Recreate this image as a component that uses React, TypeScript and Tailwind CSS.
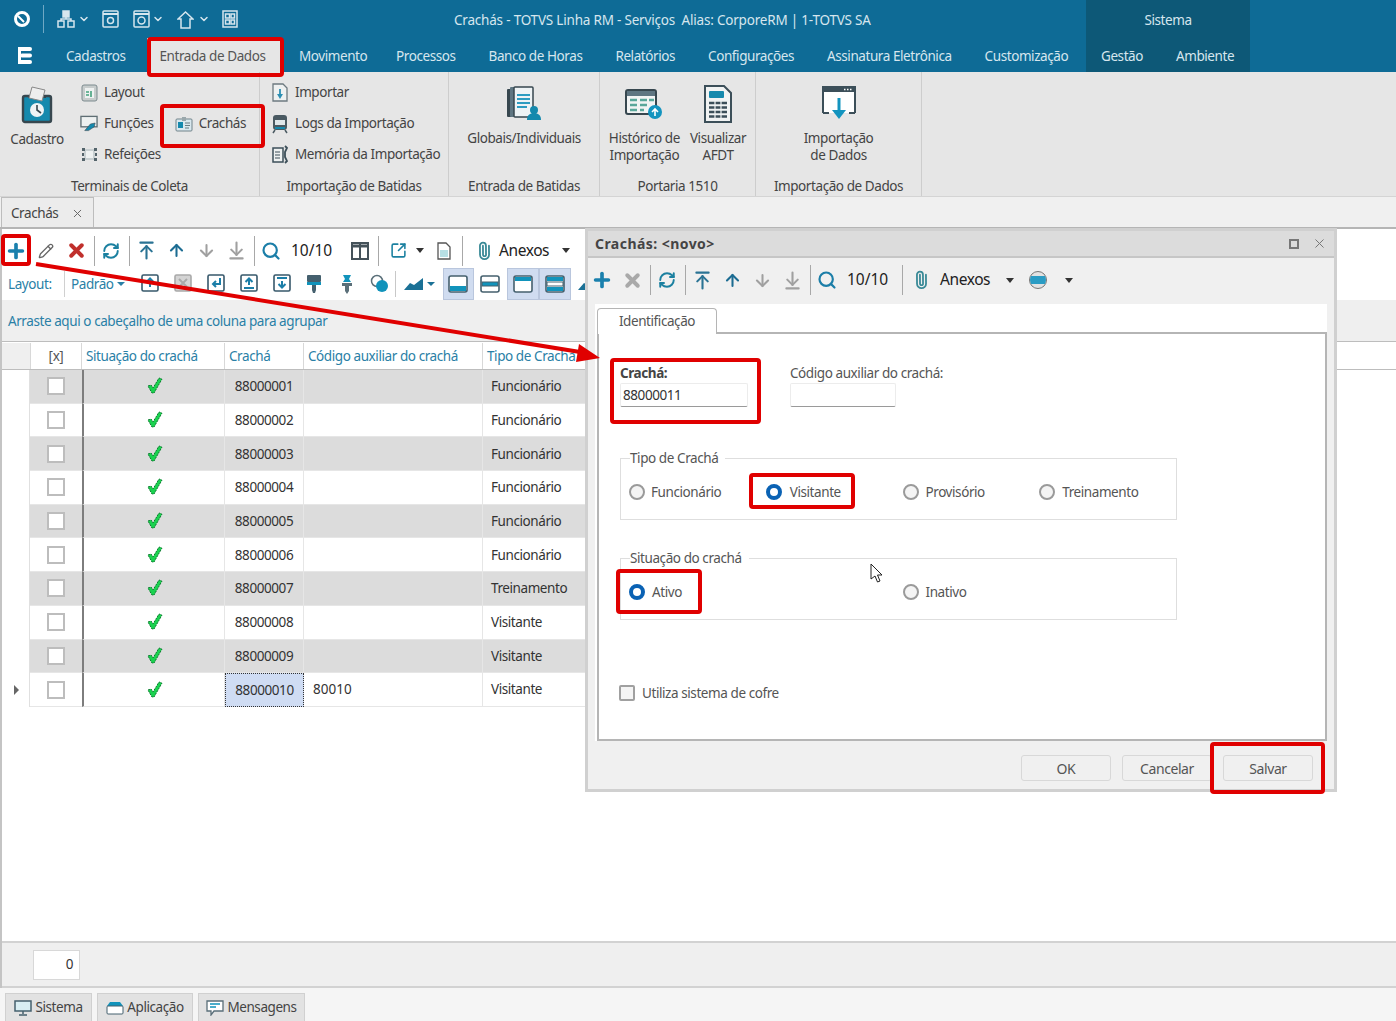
import {
  ArrowDown,
  ArrowDownToLine,
  ArrowUp,
  ArrowUpToLine,
  ChevronDown,
  Paperclip,
  Pencil,
  Plus,
  RefreshCw,
  Search,
  SquareArrowOutUpRight,
  X,
} from 'lucide-react';
import type { ReactNode } from 'react';

const menuItems = [
  'Processos',
  'Banco de Horas',
  'Relatórios',
  'Configurações',
  'Assinatura Eletrônica',
  'Customização',
];

const rows = [
  { id: '88000001', aux: '', tipo: 'Funcionário' },
  { id: '88000002', aux: '', tipo: 'Funcionário' },
  { id: '88000003', aux: '', tipo: 'Funcionário' },
  { id: '88000004', aux: '', tipo: 'Funcionário' },
  { id: '88000005', aux: '', tipo: 'Funcionário' },
  { id: '88000006', aux: '', tipo: 'Funcionário' },
  { id: '88000007', aux: '', tipo: 'Treinamento' },
  { id: '88000008', aux: '', tipo: 'Visitante' },
  { id: '88000009', aux: '', tipo: 'Visitante' },
  { id: '88000010', aux: '80010', tipo: 'Visitante' },
];

function Sep() {
  return <span className="ml-[3px] mr-px h-[30px] w-px bg-[#a8a8a8]" />;
}

function Tool({ children }: { children: ReactNode }) {
  return <span className="flex w-[30px] shrink-0 items-center justify-center">{children}</span>;
}

function Caret({ className = '' }: { className?: string }) {
  return <span className={`h-0 w-0 border-x-[4px] border-t-[5px] border-x-transparent border-t-[#333] ${className}`} />;
}

function CheckMark() {
  return (
    <svg width="16" height="18" viewBox="0 0 16 18">
      <path d="M1 9l3-1 2 3 6-10 3 1-8 14H5z" fill="#1ad24f" stroke="#0b7a2e" strokeWidth="1" strokeDasharray="2 1" />
    </svg>
  );
}

function Radio({ on = false }: { on?: boolean }) {
  if (on) {
    return <span className="h-4 w-4 shrink-0 rounded-full border-[4px] border-[#0a62b4] bg-white" />;
  }
  return <span className="h-4 w-4 shrink-0 rounded-full border-2 border-[#9a9a9a] bg-[#f4f4f4]" />;
}

function CaixaIcon({ children, muted = false }: { children: ReactNode; muted?: boolean }) {
  const c = muted ? '#a9a9a9' : '#37586b';
  return (
    <svg width="18" height="18" viewBox="0 0 18 18">
      <rect x="1" y="1" width="16" height="16" rx="1.5" fill={muted ? '#d4d4d4' : '#fff'} stroke={c} strokeWidth="1.6" />
      {children}
    </svg>
  );
}

function FaixaIcon({ variant }: { variant: 'bottom' | 'mid' | 'top' | 'both' }) {
  return (
    <svg width="20" height="20" viewBox="0 0 20 20">
      <rect x="1" y="2" width="18" height="16" rx="2" fill="#fff" stroke="#45606e" strokeWidth="1.6" />
      {variant === 'bottom' && <rect x="2" y="12" width="16" height="5" fill="#1193bb" />}
      {variant === 'top' && <rect x="2" y="3" width="16" height="4" fill="#1193bb" />}
      {variant === 'mid' && <rect x="2" y="8" width="16" height="4" fill="#1193bb" stroke="#45606e" strokeWidth="1" />}
      {variant === 'both' && <rect x="2" y="8" width="16" height="4" fill="#fff" stroke="#45606e" strokeWidth="1" />}
      {variant === 'both' && <rect x="2" y="3" width="16" height="4" fill="#1193bb" />}
      {variant === 'both' && <rect x="2" y="13" width="16" height="4" fill="#1193bb" />}
    </svg>
  );
}

function CadastroIcon() {
  return (
    <svg width="32" height="38" viewBox="0 0 32 38">
      <rect x="2" y="10" width="28" height="26" rx="2" fill="#1589ad" stroke="#37474f" strokeWidth="2.4" />
      <rect x="7" y="9" width="18" height="3" fill="#37474f" />
      <path d="M11 1l13 3-3 11-13-3z" fill="#eee" stroke="#888" />
      <circle cx="16" cy="24" r="7" fill="#eef3f5" />
      <path d="M16 19v5l4 3" stroke="#37474f" strokeWidth="1.6" fill="none" />
    </svg>
  );
}

function GlobaisIcon() {
  return (
    <svg width="36" height="36" viewBox="0 0 36 36">
      <rect x="1" y="3" width="19" height="28" rx="1" fill="#37474f" />
      <rect x="4" y="1" width="19" height="30" rx="1" fill="#5f7682" />
      <rect x="8" y="1" width="19" height="30" rx="1" fill="#eef3f5" stroke="#37474f" strokeWidth="1.5" />
      <path d="M11 9h13M11 13h13M11 17h13M11 21h10" stroke="#2d9cc1" strokeWidth="1.8" />
      <circle cx="28" cy="24" r="4" fill="#1589ad" />
      <path d="M21 34c0-5 3-7 7-7s7 2 7 7z" fill="#1589ad" />
    </svg>
  );
}

function HistoricoIcon() {
  return (
    <svg width="38" height="32" viewBox="0 0 38 32">
      <rect x="1" y="2" width="30" height="24" rx="2" fill="#f2f4f4" stroke="#37474f" strokeWidth="2" />
      <rect x="2" y="3" width="28" height="5" fill="#5f7682" />
      <path d="M5 12h7M15 12h7M24 12h5M5 17h7M15 17h7M5 22h7M15 22h4" stroke="#5aa79a" strokeWidth="2.4" />
      <circle cx="30" cy="24" r="7" fill="#1394bf" />
      <path d="M30 28v-7M27 24l3-3 3 3" stroke="#fff" strokeWidth="1.6" fill="none" />
    </svg>
  );
}

function AfdtIcon() {
  return (
    <svg width="30" height="38" viewBox="0 0 30 38">
      <path d="M2 1h19l7 7v29H2z" fill="#f1f3f3" stroke="#3c4f59" strokeWidth="2" />
      <rect x="6" y="6" width="15" height="7" rx="1" fill="#1589ad" />
      <path d="M6 18h18M6 22.5h18M6 27h18M6 31.5h18" stroke="#3c4f59" strokeWidth="2.4" />
      <path d="M12 16v18M18 16v18" stroke="#f1f3f3" strokeWidth="1.2" />
    </svg>
  );
}

function ImportaDadosIcon() {
  return (
    <svg width="36" height="38" viewBox="0 0 36 38">
      <path d="M2 28V2h32v26" fill="#fff" stroke="#3c4f59" strokeWidth="2" />
      <path d="M2 28h6M28 28h6" stroke="#3c4f59" strokeWidth="2" />
      <rect x="2" y="2" width="32" height="5" fill="#3c4f59" />
      <path d="M23 4.5h1.5M26 4.5h1.5M29 4.5h1.5" stroke="#fff" strokeWidth="1.5" />
      <path d="M18 13v16" stroke="#1394bf" strokeWidth="3" />
      <path d="M11 25l7 9 7-9z" fill="#1394bf" />
    </svg>
  );
}

function LayoutIcon() {
  return (
    <svg width="17" height="18" viewBox="0 0 17 18">
      <rect x="1" y="1" width="15" height="16" rx="2" fill="#c7cccc" stroke="#7d8b8f" />
      <rect x="4" y="4" width="9" height="10" fill="#eef1f1" />
      <path d="M5 11h3M10 7v6M5 8h3" stroke="#44a27e" strokeWidth="1.6" />
    </svg>
  );
}

function FuncoesIcon() {
  return (
    <svg width="19" height="17" viewBox="0 0 19 17">
      <rect x="1" y="1" width="17" height="11" fill="#eef1f1" stroke="#5f6e74" strokeWidth="1.4" />
      <path d="M5 16l6-7 5-1-1 4-6 4z" fill="#1589ad" stroke="#37474f" strokeWidth=".6" />
    </svg>
  );
}

function RefeicoesIcon() {
  return (
    <svg width="17" height="15" viewBox="0 0 17 15">
      <rect x="3" y="2" width="11" height="11" fill="#c9d0d2" />
      <rect x="5" y="4" width="7" height="7" fill="#eef1f1" />
      <path d="M1 1h3v3H1zM13 1h3v3h-3zM1 11h3v3H1zM13 11h3v3h-3zM1 6h2v3H1zM14 6h2v3h-2z" fill="#54646b" />
    </svg>
  );
}

function CrachaIcon() {
  return (
    <svg width="18" height="16" viewBox="0 0 18 16">
      <rect x="1" y="3" width="16" height="12" rx="1" fill="#d9e8ee" stroke="#71838a" />
      <rect x="7" y="1" width="4" height="4" fill="#9aa7ab" />
      <rect x="3" y="6" width="5" height="6" fill="#1589ad" />
      <path d="M10 7h5M10 9.5h5M10 12h4" stroke="#6b7d83" />
    </svg>
  );
}

function ImportarIcon() {
  return (
    <svg width="16" height="19" viewBox="0 0 16 19">
      <path d="M1 1h10l4 4v13H1z" fill="#eef1f1" stroke="#6d7a80" strokeWidth="1.3" />
      <path d="M8 6v8" stroke="#2c8fb3" strokeWidth="1.8" />
      <path d="M5 11l3 5 3-5z" fill="#2c8fb3" />
    </svg>
  );
}

function LogsIcon() {
  return (
    <svg width="16" height="20" viewBox="0 0 16 20">
      <rect x="1" y="1" width="14" height="15" rx="3" fill="#4a5a62" />
      <rect x="3" y="6" width="10" height="5" fill="#dfe7ea" />
      <path d="M3 16l-2 3M13 16l2 3" stroke="#4a5a62" strokeWidth="1.5" />
      <rect x="3" y="13" width="10" height="2" fill="#1589ad" />
    </svg>
  );
}

function MemoriaIcon() {
  return (
    <svg width="18" height="19" viewBox="0 0 18 19">
      <rect x="2" y="3" width="10" height="14" fill="#eef1f1" stroke="#3c4f59" strokeWidth="1.5" />
      <path d="M4 7h5M4 10h5M4 13h5" stroke="#3c4f59" />
      <path d="M14 1l2 2-2 4v5l2 4-2 2" stroke="#3c4f59" strokeWidth="1.8" fill="none" />
    </svg>
  );
}

function RibbonRow({ icon, label }: { icon: ReactNode; label: string }) {
  return (
    <div className="flex h-[31px] items-center gap-[6px] whitespace-nowrap">
      <span className="flex w-[18px] justify-center">{icon}</span>
      <span>{label}</span>
    </div>
  );
}

function RibbonGroup({ title, width, children }: { title: string; width: string; children: ReactNode }) {
  return (
    <div className={`flex shrink-0 flex-col border-r border-[#cdcdcd] ${width}`}>
      <div className="h-[104px]">{children}</div>
      <div className="text-center leading-[20px]">{title}</div>
    </div>
  );
}

function BigButton({ icon, lines }: { icon: ReactNode; lines: string[] }) {
  return (
    <div className="flex flex-col items-center">
      <div className="flex h-[58px] items-center pt-[6px]">{icon}</div>
      <div className="text-center leading-[17px]">
        {lines.map((l) => (
          <div key={l} className="whitespace-nowrap">{l}</div>
        ))}
      </div>
    </div>
  );
}

function Annotation({ className }: { className: string }) {
  return <div className={`pointer-events-none absolute rounded-[4px] border-[4px] border-[#e00000] ${className}`} />;
}

export default function App() {
  return (
    <div className="relative flex h-[1021px] w-[1396px] flex-col overflow-hidden bg-white font-['Noto_Sans',sans-serif] text-[13.5px] tracking-[-0.42px] text-[#444]">
      {/* title bar + menu */}
      <div className="h-[72px] shrink-0 bg-[#0e6b96] text-[#d6e6ee]">
        <div className="flex h-[38px]">
          <div className="flex w-[1086px] shrink-0 items-center">
            <svg className="ml-[13px]" width="18" height="18" viewBox="0 0 18 18">
              <circle cx="9" cy="9" r="6.5" fill="none" stroke="#fff" strokeWidth="3" />
              <path d="M5 6l6 6" stroke="#fff" strokeWidth="2" />
            </svg>
            <span className="ml-[12px] h-[28px] w-px bg-[#6fa8c4]" />
            <svg className="ml-[13px]" width="18" height="18" viewBox="0 0 18 18" fill="none" stroke="#d6e6ee" strokeWidth="1.5">
              <rect x="6" y="1" width="6" height="6" fill="#d6e6ee" />
              <rect x="1" y="11" width="6" height="6" />
              <rect x="11" y="11" width="6" height="6" />
              <path d="M9 7v2M4 11V9h10v2" />
            </svg>
            <ChevronDown className="ml-[3px]" size={12} strokeWidth={3} />
            <svg className="ml-[12px]" width="17" height="18" viewBox="0 0 17 18" fill="none" stroke="#d6e6ee" strokeWidth="1.5">
              <rect x="1" y="1" width="15" height="16" rx="1" />
              <path d="M1 4h15" strokeWidth="2" />
              <circle cx="8.5" cy="10.5" r="3" />
            </svg>
            <svg className="ml-[14px]" width="17" height="18" viewBox="0 0 17 18" fill="none" stroke="#d6e6ee" strokeWidth="1.5">
              <rect x="1" y="1" width="15" height="16" rx="1" />
              <path d="M1 4h15" strokeWidth="2" />
              <circle cx="8.5" cy="10.5" r="3.5" />
            </svg>
            <ChevronDown className="ml-[2px]" size={12} strokeWidth={3} />
            <svg className="ml-[13px]" width="17" height="19" viewBox="0 0 17 19" fill="none" stroke="#d6e6ee" strokeWidth="1.5">
              <path d="M1 9l7.5-7L16 9h-3v9H4V9z" />
            </svg>
            <ChevronDown className="ml-[4px]" size={12} strokeWidth={3} />
            <svg className="ml-[12px]" width="16" height="18" viewBox="0 0 16 18" fill="none" stroke="#d6e6ee" strokeWidth="1.5">
              <rect x="1" y="1" width="14" height="16" />
              <rect x="3.5" y="4" width="4" height="4" />
              <rect x="9" y="4" width="3.5" height="4" />
              <rect x="3.5" y="10" width="4" height="4" />
              <rect x="9" y="10" width="3.5" height="4" />
            </svg>
            <span className="ml-[216px] whitespace-pre pt-[2px] tracking-[-0.2px]">Crachás - TOTVS Linha RM - Serviços  Alias: CorporeRM | 1-TOTVS SA</span>
          </div>
          <div className="flex w-[164px] items-center justify-center bg-[#0d5877] pt-[2px]">Sistema</div>
        </div>
        <div className="flex h-[34px]">
          <div className="flex w-[1086px] shrink-0 items-center">
            <svg className="ml-[17px]" width="16" height="19" viewBox="0 0 16 19" fill="#fff">
              <rect x="1" y="1" width="14" height="4" rx="2" />
              <rect x="3" y="7.5" width="12" height="4" rx="2" />
              <rect x="1" y="14" width="14" height="4" rx="2" />
              <rect x="1" y="1" width="3" height="17" />
            </svg>
            <span className="ml-[33px] w-[81px] pt-[2px]">Cadastros</span>
            <div className="flex h-[34px] w-[136px] items-center justify-center bg-[#e6e6e6] pr-[5px] pt-[2px] text-[#555]">Entrada de Dados</div>
            <span className="ml-[16px] w-[65px] whitespace-nowrap pt-[2px]">Movimento</span>
            <div className="ml-[32px] flex gap-[33px] pt-[2px]">
              {menuItems.map((m) => (
                <span key={m} className="whitespace-nowrap">{m}</span>
              ))}
            </div>
          </div>
          <div className="flex w-[164px] items-center gap-[33px] bg-[#0d5877] pl-[15px] pt-[2px]">
            <span>Gestão</span>
            <span>Ambiente</span>
          </div>
        </div>
      </div>

      {/* ribbon */}
      <div className="flex h-[125px] shrink-0 border-b border-[#d4d4d4] bg-[#e6e6e6]">
        <RibbonGroup title="Terminais de Coleta" width="w-[260px]">
          <div className="flex pt-[5px]">
            <div className="flex w-[74px] flex-col items-center pt-[9px]">
              <CadastroIcon />
              <span className="mt-[5px]">Cadastro</span>
            </div>
            <div className="pl-[6px]">
              <RibbonRow icon={<LayoutIcon />} label="Layout" />
              <RibbonRow icon={<FuncoesIcon />} label="Funções" />
              <RibbonRow icon={<RefeicoesIcon />} label="Refeições" />
            </div>
            <div className="ml-[14px] pt-[31px]">
              <RibbonRow icon={<CrachaIcon />} label="Crachás" />
            </div>
          </div>
        </RibbonGroup>
        <RibbonGroup title="Importação de Batidas" width="w-[189px]">
          <div className="pl-[11px] pt-[5px]">
            <RibbonRow icon={<ImportarIcon />} label="Importar" />
            <RibbonRow icon={<LogsIcon />} label="Logs da Importação" />
            <RibbonRow icon={<MemoriaIcon />} label="Memória da Importação" />
          </div>
        </RibbonGroup>
        <RibbonGroup title="Entrada de Batidas" width="w-[151px]">
          <BigButton icon={<GlobaisIcon />} lines={['Globais/Individuais']} />
        </RibbonGroup>
        <RibbonGroup title="Portaria 1510" width="w-[156px]">
          <div className="flex justify-center gap-[10px]">
            <BigButton icon={<HistoricoIcon />} lines={['Histórico de', 'Importação']} />
            <BigButton icon={<AfdtIcon />} lines={['Visualizar', 'AFDT']} />
          </div>
        </RibbonGroup>
        <RibbonGroup title="Importação de Dados" width="w-[166px]">
          <BigButton icon={<ImportaDadosIcon />} lines={['Importação', 'de Dados']} />
        </RibbonGroup>
      </div>

      {/* doc tab strip */}
      <div className="flex h-[32px] shrink-0 items-end border-b-2 border-[#b5b5b5] bg-[#f0f0f0] pl-px">
        <div className="flex h-[30px] w-[93px] items-center justify-between border border-b-0 border-[#bdbdbd] bg-[#ececec] pl-[9px] pr-[9px] pt-[2px]">
          <span>Crachás</span>
          <X size={13} strokeWidth={1.8} className="text-[#666]" />
        </div>
      </div>

      {/* main area */}
      <div className="flex min-h-0 flex-1 flex-col border-l-2 border-[#c4c4c4]">
        <div className="flex h-[39px] shrink-0 items-center pt-[4px] text-[15.5px] text-[#222]">
          <span className="ml-[-1px]" />
          <Tool><Plus size={22} strokeWidth={4} className="text-[#1a80ad]" /></Tool>
          <Tool><Pencil size={16} className="text-[#666]" /></Tool>
          <Tool><X size={21} strokeWidth={4.5} className="text-[#c0302c]" /></Tool>
          <Sep />
          <Tool><RefreshCw size={18} strokeWidth={2.6} className="text-[#1b80a0]" /></Tool>
          <Sep />
          <Tool><ArrowUpToLine size={21} strokeWidth={2.4} className="text-[#2a7394]" /></Tool>
          <Tool><ArrowUp size={19} strokeWidth={2.6} className="text-[#1c6c92]" /></Tool>
          <Tool><ArrowDown size={19} strokeWidth={2.6} className="text-[#a0a0a0]" /></Tool>
          <Tool><ArrowDownToLine size={21} strokeWidth={2.4} className="text-[#a0a0a0]" /></Tool>
          <Sep />
          <Tool><Search size={20} strokeWidth={2.6} className="text-[#1b7ea8]" /></Tool>
          <span className="ml-[5px] w-[41px] tracking-normal">10/10</span>
          <span className="ml-[13px] flex w-[30px] justify-center">
            <svg width="18" height="18" viewBox="0 0 18 18" fill="none" stroke="#45525a" strokeWidth="2">
              <rect x="1" y="1" width="16" height="16" />
              <path d="M9 1v16" />
              <path d="M1 4h16" strokeWidth="3" />
            </svg>
          </span>
          <Sep />
          <span className="ml-[3px]" />
          <Tool><SquareArrowOutUpRight size={17} strokeWidth={2.2} className="text-[#1b80a0]" /></Tool>
          <span className="flex w-[14px] justify-center"><Caret /></span>
          <span className="ml-[2px]" />
          <Tool>
            <svg width="14" height="18" viewBox="0 0 14 18">
              <path d="M1 1h8l4 4v12H1z" fill="#fff" stroke="#555" strokeWidth="1.3" />
              <rect x="3" y="8" width="8" height="7" fill="#b7dfe4" />
            </svg>
          </Tool>
          <Sep />
          <span className="ml-[5px]" />
          <Tool><Paperclip size={18} strokeWidth={2.4} className="-rotate-45 text-[#3a8a97]" /></Tool>
          <span className="w-[63px]">Anexos</span>
          <Caret />
        </div>
        <div className="flex h-[32px] shrink-0 items-center">
          <span className="ml-[6px] w-[56px] text-[#2a7fa6]">Layout:</span>
          <span className="h-[26px] w-px bg-[#d0d0d0]" />
          <span className="ml-[6px] text-[#2a7fa6]">Padrão</span>
          <span className="ml-[3px] h-0 w-0 border-x-[4px] border-t-[4px] border-x-transparent border-t-[#2a7fa6]" />
          <div className="ml-[9px] flex">
            <span className="flex w-[33px] justify-center"><CaixaIcon><path d="M9 13V5M5.5 8L9 4.5 12.5 8" stroke="#1b7ea8" strokeWidth="2" fill="none" /></CaixaIcon></span>
            <span className="flex w-[33px] justify-center"><CaixaIcon muted><path d="M5 5l8 8M13 5l-8 8" stroke="#a9a9a9" strokeWidth="2" /></CaixaIcon></span>
            <span className="flex w-[33px] justify-center"><CaixaIcon><path d="M13 4v6H6M9 7l-3 3 3 3" stroke="#1b7ea8" strokeWidth="2" fill="none" /></CaixaIcon></span>
            <span className="flex w-[33px] justify-center"><CaixaIcon><path d="M9 11V5M5.5 8L9 4.5 12.5 8M4 14h10" stroke="#1b7ea8" strokeWidth="2" fill="none" /></CaixaIcon></span>
            <span className="flex w-[32px] justify-center"><CaixaIcon><path d="M9 7v6M5.5 10L9 13.5 12.5 10M4 4h10" stroke="#1b7ea8" strokeWidth="2" fill="none" /></CaixaIcon></span>
            <span className="flex w-[33px] justify-center">
              <svg width="16" height="20" viewBox="0 0 16 20">
                <rect x="1" y="1" width="14" height="7" rx="1" fill="#45606e" />
                <rect x="1" y="8" width="14" height="3" fill="#1193bb" />
                <path d="M6 11h4v5l-1 3H7l-1-3z" fill="#45606e" />
              </svg>
            </span>
            <span className="flex w-[32px] justify-center">
              <svg width="14" height="20" viewBox="0 0 14 20">
                <path d="M3 1h8l-2 4 2 3H3l2-3z" fill="#1193bb" />
                <path d="M2 9h10v3H9v5l-2 3-2-3v-5H2z" fill="#5a6f79" />
              </svg>
            </span>
            <span className="flex w-[33px] justify-center">
              <svg width="19" height="19" viewBox="0 0 19 19">
                <circle cx="7" cy="7" r="5.5" fill="#fff" stroke="#5a6f79" strokeWidth="1.5" />
                <circle cx="12" cy="12" r="6" fill="#1193bb" />
              </svg>
            </span>
          </div>
          <span className="ml-[-1px] mr-[2px] h-[26px] w-px bg-[#c8c8c8]" />
          <span className="ml-[5px] flex items-center gap-[3px]">
            <svg width="21" height="14" viewBox="0 0 21 14"><path d="M1 13l6-7 4 2 9-7v12z" fill="#1b7196" /></svg>
            <span className="h-0 w-0 border-x-[4px] border-t-[4px] border-x-transparent border-t-[#1b7196]" />
          </span>
          <div className="ml-[8px] flex">
            <span className="flex h-[32px] w-[31px] items-center justify-center border border-[#b9c6dd] bg-[#d0dcf0]"><FaixaIcon variant="bottom" /></span>
            <span className="flex h-[32px] w-[33px] items-center justify-center"><FaixaIcon variant="mid" /></span>
            <span className="flex h-[32px] w-[32px] items-center justify-center border border-[#b9c6dd] bg-[#d0dcf0]"><FaixaIcon variant="top" /></span>
            <span className="flex h-[32px] w-[32px] items-center justify-center border border-[#b9c6dd] bg-[#d0dcf0]"><FaixaIcon variant="both" /></span>
            <span className="ml-[6px] flex items-center">
              <svg width="21" height="14" viewBox="0 0 21 14"><path d="M1 13l6-7 4 2 9-7v12z" fill="#1b7196" /></svg>
            </span>
          </div>
        </div>
        <div className="flex h-[41px] shrink-0 items-center bg-[#efefef] pl-[6px] pt-[2px] text-[#2a7fa6]">
          Arraste aqui o cabeçalho de uma coluna para agrupar
        </div>

        {/* grid */}
        <div className="min-h-0 flex-1 bg-white">
          <div className="grid h-[29px] grid-cols-[28px_52px_143px_79px_179px_200px] border-y border-[#bdbdbd] pt-px text-[#2a7fa6]">
            <div className="bg-[#efefef]" />
            <div className="flex items-center justify-center border-x border-[#d8d8d8] text-[#555]">[x]</div>
            <div className="flex items-center border-r border-[#d8d8d8] pl-[4px]">Situação do crachá</div>
            <div className="flex items-center border-r border-[#d8d8d8] pl-[4px]">Crachá</div>
            <div className="flex items-center border-r border-[#d8d8d8] pl-[4px]">Código auxiliar do crachá</div>
            <div className="flex items-center whitespace-nowrap pl-[4px]">Tipo de Crachá</div>
          </div>
          {rows.map((r, i) => {
            const last = i === rows.length - 1;
            const stripe = i % 2 === 0 ? 'bg-[#dcdcdc]' : 'bg-white';
            return (
              <div key={r.id} className="grid h-[33.7px] grid-cols-[28px_52px_143px_79px_179px_200px] text-[#333]">
                <div className="flex items-center justify-center border-r border-[#e0e0e0] pl-[3px] pr-[1px]">
                  {last && <span className="h-0 w-0 border-y-[5px] border-l-[5px] border-y-transparent border-l-[#666]" />}
                </div>
                <div className={`flex items-center justify-center border-b border-[#e6e6e6] ${stripe}`}>
                  <span className="h-[18px] w-[18px] border-2 border-[#bdbdbd] bg-white" />
                </div>
                <div className={`flex items-center justify-center border-b border-l-2 border-r border-[#e6e6e6] border-l-[#7d7d7d] pl-[2px] ${stripe}`}>
                  <CheckMark />
                </div>
                {last ? (
                  <div className="flex items-center justify-center border border-dotted border-[#333] bg-[#cfdcf3]">{r.id}</div>
                ) : (
                  <div className={`flex items-center justify-center border-b border-r border-[#e6e6e6] ${stripe}`}>{r.id}</div>
                )}
                <div className={`flex items-center border-b border-r border-[#e6e6e6] pl-[9px] tracking-[0px] ${stripe}`}>{r.aux}</div>
                <div className={`flex items-center border-b border-[#e6e6e6] pl-[8px] ${stripe}`}>{r.tipo}</div>
              </div>
            );
          })}
        </div>

        <div className="flex h-[47px] shrink-0 items-center border-y-2 border-[#d2d2d2] bg-[#efefef] pl-[31px]">
          <div className="flex h-[30px] w-[47px] items-center justify-end border border-[#d8d8d8] bg-white pr-[6px] text-[#333]">0</div>
        </div>
      </div>

      {/* bottom tabs */}
      <div className="flex h-[33px] shrink-0 items-end gap-[5px] bg-[#f5f5f5] pl-[5px]">
        <div className="flex h-[28px] w-[87px] items-center justify-center gap-[3px] border border-b-0 border-[#d0d0d0] bg-[#e2e2e2]">
          <svg width="18" height="16" viewBox="0 0 18 16">
            <rect x="1" y="1" width="16" height="10" fill="#d9eef3" stroke="#45606e" strokeWidth="1.5" />
            <path d="M9 11v3M5 15h8" stroke="#45606e" strokeWidth="1.5" />
          </svg>
          <span>Sistema</span>
        </div>
        <div className="flex h-[28px] w-[96px] items-center justify-center gap-[3px] border border-b-0 border-[#d0d0d0] bg-[#e2e2e2]">
          <svg width="18" height="14" viewBox="0 0 18 14">
            <path d="M1 5l3-4h10l3 4z" fill="#1193bb" />
            <rect x="1" y="5" width="16" height="8" rx="1" fill="#fff" stroke="#45606e" />
          </svg>
          <span>Aplicação</span>
        </div>
        <div className="flex h-[28px] w-[107px] items-center justify-center gap-[3px] border border-b-0 border-[#d0d0d0] bg-[#e2e2e2]">
          <svg width="18" height="16" viewBox="0 0 18 16">
            <path d="M1 1h16v10H8l-3 4v-4H1z" fill="#fff" stroke="#5a6f79" strokeWidth="1.3" />
            <path d="M4 4h10M4 7h6" stroke="#1193bb" strokeWidth="1.5" />
          </svg>
          <span>Mensagens</span>
        </div>
      </div>

      {/* dialog window */}
      <div className="absolute left-[585px] top-[228px] flex h-[564px] w-[752px] flex-col border-[3px] border-[#d0d0d0] bg-[#f0f0f0]">
        <div className="flex h-[27px] shrink-0 items-center justify-between border-b-2 border-[#c6c6c6] bg-[#dcdcdc] pl-[7px] pr-[7px]">
          <span className="text-[14px] font-bold tracking-[0.45px] text-[#444]">Crachás: &lt;novo&gt;</span>
          <span className="flex items-center gap-[13px] text-[#777]">
            <span className="h-[10px] w-[10px] border-2 border-[#777]" />
            <X size={15} strokeWidth={1.6} />
          </span>
        </div>
        <div className="flex h-[46px] shrink-0 items-center pb-[2px] text-[15.5px] text-[#222]">
          <span className="ml-[-1px]" />
          <Tool><Plus size={22} strokeWidth={4} className="text-[#1a80ad]" /></Tool>
          <Tool><X size={21} strokeWidth={4.5} className="text-[#a9a9a9]" /></Tool>
          <Sep />
          <Tool><RefreshCw size={18} strokeWidth={2.6} className="text-[#1b80a0]" /></Tool>
          <Sep />
          <Tool><ArrowUpToLine size={21} strokeWidth={2.4} className="text-[#2a7394]" /></Tool>
          <Tool><ArrowUp size={19} strokeWidth={2.6} className="text-[#1c6c92]" /></Tool>
          <Tool><ArrowDown size={19} strokeWidth={2.6} className="text-[#a0a0a0]" /></Tool>
          <Tool><ArrowDownToLine size={21} strokeWidth={2.4} className="text-[#a0a0a0]" /></Tool>
          <Sep />
          <Tool><Search size={20} strokeWidth={2.6} className="text-[#1b7ea8]" /></Tool>
          <span className="ml-[5px] w-[41px] tracking-normal">10/10</span>
          <span className="ml-[11px]" />
          <Sep />
          <span className="ml-[2px]" />
          <Tool><Paperclip size={18} strokeWidth={2.4} className="-rotate-45 text-[#3a8a97]" /></Tool>
          <span className="ml-[4px] w-[66px]">Anexos</span>
          <Caret />
          <span className="ml-[15px] flex h-[18px] w-[18px] items-center justify-center overflow-hidden rounded-full border border-[#777] bg-[#e2e2e2]">
            <span className="h-[8px] w-full bg-[#2a9cc4]" />
          </span>
          <Caret className="ml-[18px]" />
        </div>
        <div className="mx-[7px] flex min-h-0 flex-1 flex-col bg-white pl-[2px] pt-[4px]">
          <div className="flex h-[26px] shrink-0">
            <div className="flex w-[120px] items-center justify-center rounded-t-[4px] border border-b-0 border-[#b5b5b5] bg-white text-[#555]">
              Identificação
            </div>
            <div className="flex-1 border-b-2 border-[#b5b5b5]" />
          </div>
          <div className="h-[407px] shrink-0 border-x-2 border-b-2 border-[#b5b5b5] bg-white pl-[21px] pt-[30px] text-[#555]">
            <div className="flex">
              <div className="w-[170px]">
                <div className="font-bold leading-[19px] text-[#444]">Crachá:</div>
                <div className="flex h-[24px] w-[128px] items-center rounded-[2px] border border-[#ececec] border-b-[#9a9a9a] pl-[2px] text-[#333]">88000011</div>
              </div>
              <div>
                <div className="leading-[19px]">Código auxiliar do crachá:</div>
                <div className="h-[24px] w-[106px] rounded-[2px] border border-[#ececec] border-b-[#9a9a9a]" />
              </div>
            </div>
            <fieldset className="mt-[41px] h-[72px] w-[557px] border border-[#dedede] pl-[9px]">
              <legend className="pr-[7px]">Tipo de Crachá</legend>
              <div className="ml-[-1px] grid h-[48px] grid-cols-4 items-center">
                <label className="flex items-center gap-[6px]"><Radio />Funcionário</label>
                <label className="flex items-center gap-[8px]"><Radio on />Visitante</label>
                <label className="flex items-center gap-[7px]"><Radio />Provisório</label>
                <label className="flex items-center gap-[7px]"><Radio />Treinamento</label>
              </div>
            </fieldset>
            <fieldset className="mt-[28px] h-[72px] w-[557px] border border-[#dedede] pl-[9px]">
              <legend className="pr-[7px]">Situação do crachá</legend>
              <div className="ml-[-1px] grid h-[48px] grid-cols-2 items-center">
                <label className="flex items-center gap-[7px]"><Radio on />Ativo</label>
                <label className="flex items-center gap-[7px]"><Radio />Inativo</label>
              </div>
            </fieldset>
            <label className="ml-[-1px] mt-[63px] flex items-center gap-[7px]">
              <span className="h-4 w-4 rounded-[2px] border-2 border-[#a0a0a0] bg-[#f4f4f4]" />
              Utiliza sistema de cofre
            </label>
          </div>
        </div>
        <div className="flex h-[48px] shrink-0 items-center justify-end gap-[11px] pr-[21px] pt-[6px] text-[14px] text-[#555]">
          <button className="h-[26px] w-[90px] rounded-[3px] border border-[#d8d8d8] bg-[#f0f0f0]">OK</button>
          <button className="h-[26px] w-[90px] rounded-[3px] border border-[#d8d8d8] bg-[#f0f0f0]">Cancelar</button>
          <button className="h-[26px] w-[90px] rounded-[3px] border border-[#d8d8d8] bg-[#f0f0f0]">Salvar</button>
        </div>
      </div>

      {/* mouse cursor over the dialog */}
      <svg className="absolute left-[870px] top-[563px]" width="14" height="20" viewBox="0 0 14 20">
        <path d="M1 1v15l4-3 2.5 6 2.5-1-2.5-6H12z" fill="#fff" stroke="#222" strokeWidth="1" />
      </svg>

      {/* red annotations */}
      <Annotation className="left-[147px] top-[37px] h-[40px] w-[137px]" />
      <Annotation className="left-[160px] top-[104px] h-[44px] w-[105px]" />
      <Annotation className="left-[1px] top-[234px] h-[32px] w-[30px]" />
      <Annotation className="left-[610px] top-[358px] h-[66px] w-[151px]" />
      <Annotation className="left-[749px] top-[473px] h-[36px] w-[106px]" />
      <Annotation className="left-[616px] top-[569px] h-[45px] w-[86px]" />
      <Annotation className="left-[1210px] top-[742px] h-[52px] w-[115px]" />
      <svg className="pointer-events-none absolute left-0 top-0" width="1396" height="1021" viewBox="0 0 1396 1021">
        <path d="M36 264L580 352" stroke="#e00000" strokeWidth="4" />
        <path d="M600 358L576 362 579 344z" fill="#e00000" />
      </svg>
    </div>
  );
}
